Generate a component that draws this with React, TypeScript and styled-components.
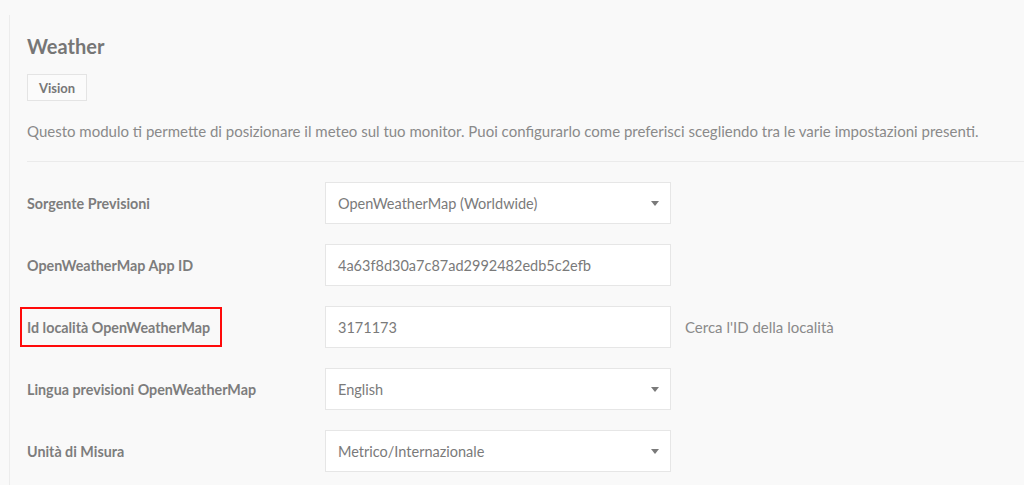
import React from 'react';
import styled, { createGlobalStyle } from 'styled-components';

const GlobalStyle = createGlobalStyle`
  html, body {
    margin: 0;
    padding: 0;
    background: #f9f9f9;
    font-family: Lato, "Open Sans", sans-serif;
    color: #7a7a7a;
  }
`;

const Panel = styled.section`
  margin: 15px 0 0 9px;
  padding: 19px 0 0 17px;
  border-left: 1px solid #ececec;
  min-height: 470px;
  box-sizing: border-box;
`;

const Title = styled.h2`
  margin: 0;
  font-size: 20px;
  line-height: 24px;
  font-weight: 700;
  color: #767676;
`;

const Tag = styled.div`
  display: inline-flex;
  align-items: center;
  justify-content: center;
  margin-top: 16px;
  width: 60px;
  height: 27px;
  box-sizing: border-box;
  border: 1px solid #e4e4e4;
  background: #fbfbfb;
  font-size: 13px;
  font-weight: 700;
  color: #777;
`;

const Description = styled.p`
  margin: 19px 0 0;
  font-size: 15px;
  line-height: 22px;
  color: #8a8a8a;
`;

const Divider = styled.hr`
  margin: 19px 0 0;
  border: none;
  border-top: 1px solid #ebebeb;
`;

const Form = styled.div`
  display: flex;
  flex-direction: column;
  gap: 20px;
  margin-top: 20px;
`;

const Row = styled.div`
  display: grid;
  grid-template-columns: 298px 346px auto;
  align-items: center;
  height: 42px;
`;

const Label = styled.div<{ $highlight?: boolean }>`
  font-size: 14.3px;
  font-weight: 700;
  color: #7d7d7d;
  ${p => p.$highlight && `
    justify-self: start;
    display: flex;
    align-items: center;
    height: 40px;
    box-sizing: border-box;
    margin-left: -7px;
    padding: 0 10px 0 5px;
    border: 2px solid #ff0a0a;
  `}
`;

const Field = styled.div<{ $select?: boolean }>`
  position: relative;
  display: flex;
  align-items: center;
  height: 42px;
  box-sizing: border-box;
  padding: 0 12px;
  background: #fff;
  border: 1px solid #e6e6e6;
  font-size: 14.5px;
  color: #7a7a7a;

  ${p => p.$select && `
    &::after {
      content: '';
      position: absolute;
      right: 11px;
      top: 18px;
      border-left: 4px solid transparent;
      border-right: 4px solid transparent;
      border-top: 5px solid #7a7a7a;
    }
  `}
`;

const Hint = styled.span`
  margin-left: 14px;
  font-size: 15px;
  color: #8a8a8a;
`;

const rows = [
  { label: 'Sorgente Previsioni', value: 'OpenWeatherMap (Worldwide)', select: true },
  { label: 'OpenWeatherMap App ID', value: '4a63f8d30a7c87ad2992482edb5c2efb' },
  { label: 'Id località OpenWeatherMap', value: '3171173', highlight: true, hint: "Cerca l'ID della località" },
  { label: 'Lingua previsioni OpenWeatherMap', value: 'English', select: true },
  { label: 'Unità di Misura', value: 'Metrico/Internazionale', select: true },
];

const App: React.FC = () => (
  <>
    <GlobalStyle />
    <Panel>
      <Title>Weather</Title>
      <Tag>Vision</Tag>
      <Description>
        Questo modulo ti permette di posizionare il meteo sul tuo monitor. Puoi configurarlo come preferisci scegliendo tra le varie impostazioni presenti.
      </Description>
      <Divider />
      <Form>
        {rows.map(r => (
          <Row key={r.label}>
            <Label $highlight={r.highlight}>{r.label}</Label>
            <Field $select={r.select}>{r.value}</Field>
            {r.hint && <Hint>{r.hint}</Hint>}
          </Row>
        ))}
      </Form>
    </Panel>
  </>
);

export default App;
